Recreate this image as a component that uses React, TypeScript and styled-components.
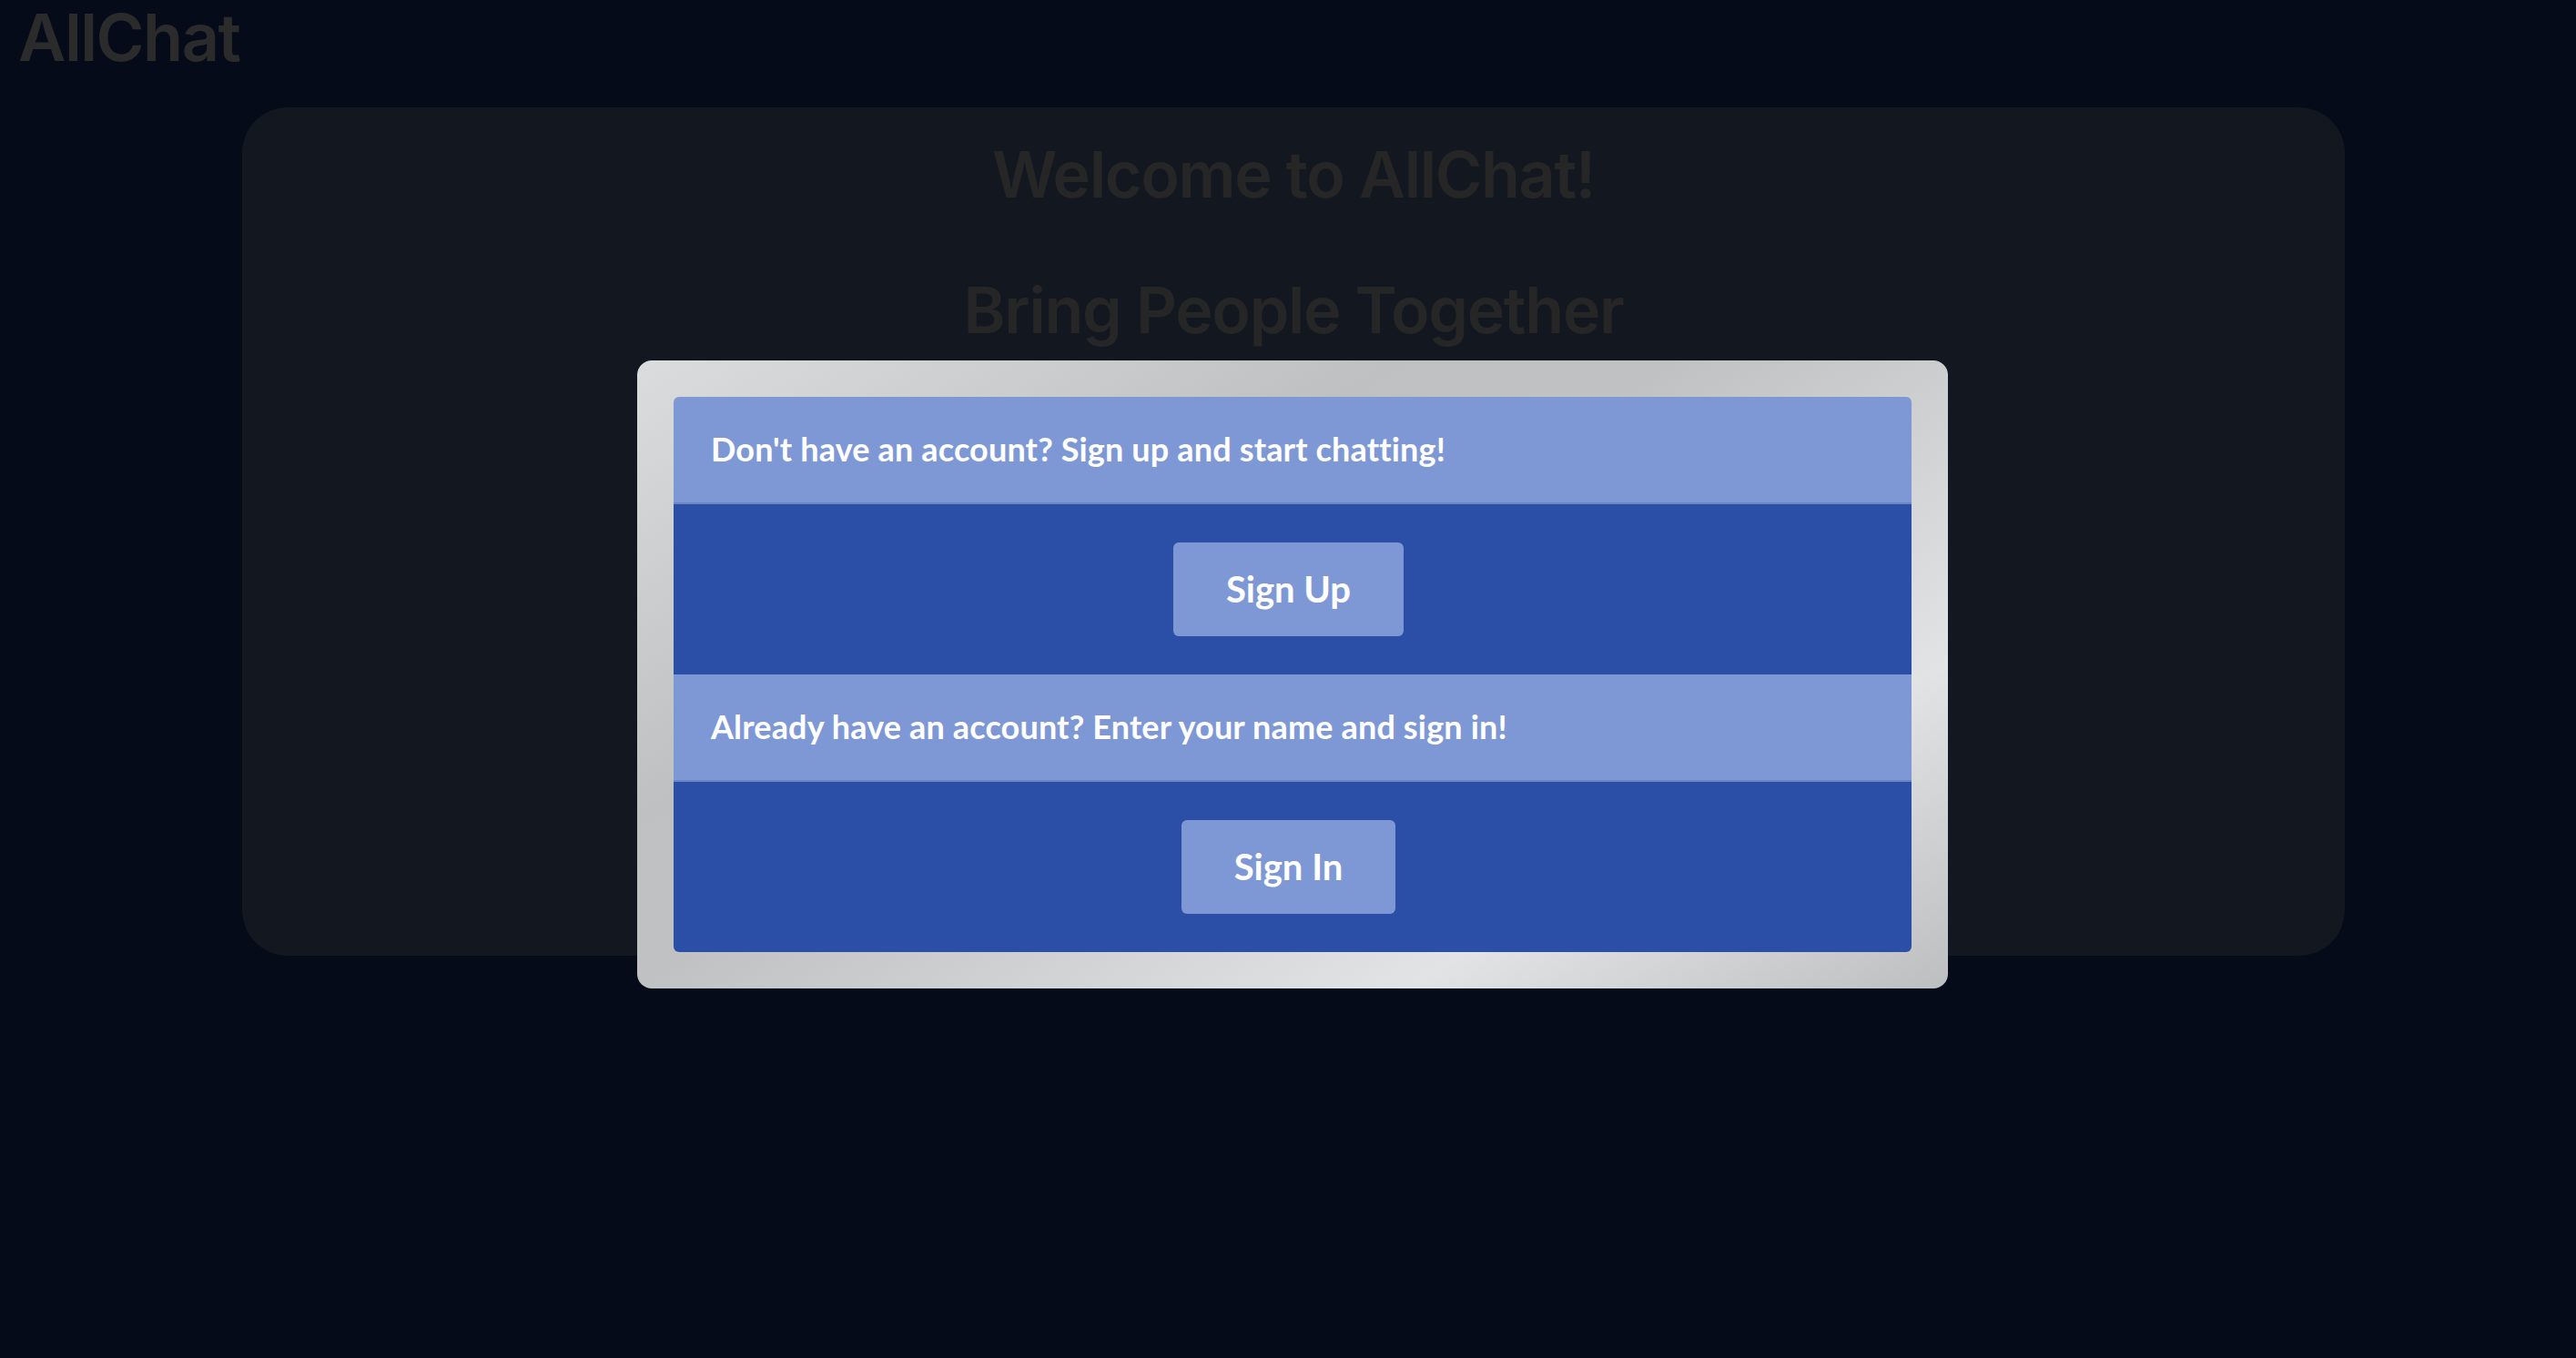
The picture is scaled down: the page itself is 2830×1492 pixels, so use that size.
import styled, { createGlobalStyle } from "styled-components";

const GlobalStyle = createGlobalStyle`
  html, body {
    margin: 0;
    padding: 0;
    background: #050b18;
  }
  * {
    box-sizing: border-box;
  }
`;

const Page = styled.div`
  min-height: 100vh;
  background: #050b18;
  font-family: Inter, "Noto Sans", sans-serif;
  overflow: hidden;
`;

const Logo = styled.h1`
  margin: 0;
  padding: 2px 0 0 20px;
  font-size: 72px;
  line-height: 78px;
  font-weight: 600;
  letter-spacing: -1.5px;
  color: #2b2b2b;
`;

const Hero = styled.section`
  margin: 38px 0 0 266px;
  width: 2310px;
  height: 932px;
  border-radius: 50px;
  background: #131720;
  display: flex;
  flex-direction: column;
  align-items: center;
  padding-top: 38px;
  gap: 77px;
`;

const HeroTitle = styled.h2`
  margin: 0;
  font-size: 70px;
  line-height: 72px;
  font-weight: 600;
  letter-spacing: -1.3px;
  color: #262626;
`;

const Modal = styled.div`
  position: fixed;
  left: 700px;
  top: 396px;
  width: 1440px;
  padding: 40px;
  border-radius: 16px;
  background: linear-gradient(
    149deg,
    #dbdcdd 0%,
    #bfc0c1 32%,
    #c0c1c2 44%,
    #e2e3e4 77%,
    #bdbebf 100%
  );
  font-family: Lato, "Open Sans", sans-serif;
`;

const Panel = styled.div`
  border-radius: 6px;
  overflow: hidden;
  display: flex;
  flex-direction: column;
`;

const Prompt = styled.div`
  background: #7e98d5;
  border-bottom: 2px solid #6c85c3;
  padding: 36px 41px 37px;
  color: #ffffff;
  font-size: 36px;
  line-height: 43px;
  font-weight: 700;
  letter-spacing: 0.15px;
`;

const ActionRow = styled.div`
  background: #2b4ea6;
  padding: 42px 9px 42px 0;
  display: flex;
  justify-content: center;
`;

const ActionButton = styled.button`
  border: none;
  border-radius: 6px;
  background: #7e98d5;
  color: #ffffff;
  font-family: Lato, "Open Sans", sans-serif;
  font-size: 40px;
  line-height: 48px;
  font-weight: 700;
  padding: 27px 58px 28px;
  cursor: pointer;
`;

export default function App() {
  return (
    <>
      <GlobalStyle />
      <Page>
        <Logo>AllChat</Logo>
        <Hero>
          <HeroTitle>Welcome to AllChat!</HeroTitle>
          <HeroTitle>Bring People Together</HeroTitle>
        </Hero>
        <Modal>
          <Panel>
            <Prompt>Don't have an account? Sign up and start chatting!</Prompt>
            <ActionRow>
              <ActionButton>Sign Up</ActionButton>
            </ActionRow>
            <Prompt>Already have an account? Enter your name and sign in!</Prompt>
            <ActionRow>
              <ActionButton>Sign In</ActionButton>
            </ActionRow>
          </Panel>
        </Modal>
      </Page>
    </>
  );
}
